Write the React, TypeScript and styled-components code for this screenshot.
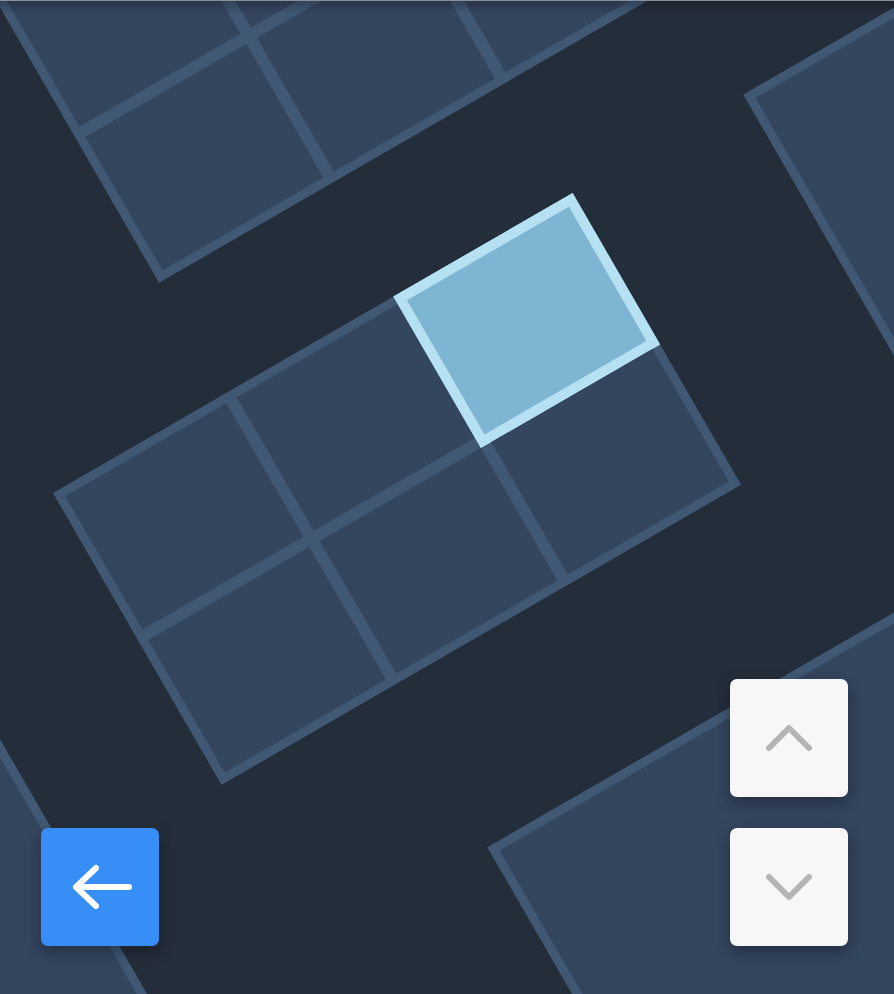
import React from "react";
import styled, { createGlobalStyle, css } from "styled-components";

const GlobalStyle = createGlobalStyle`
  *, *::before, *::after { box-sizing: border-box; }
  html, body { margin: 0; padding: 0; background: #242d3a; }
  body { font-family: "Liberation Sans", Arial, sans-serif; }
`;

const Board = styled.main`
  position: relative;
  width: 894px;
  height: 994px;
  overflow: hidden;
  background: #242d3a;

  &::after {
    content: "";
    position: absolute;
    left: 0;
    right: 0;
    top: 0;
    height: 14px;
    border-top: 1px solid #8b9097;
    background: linear-gradient(rgba(10, 14, 22, 0.28), rgba(10, 14, 22, 0));
    pointer-events: none;
    z-index: 1;
  }
`;

const Plane = styled.div`
  position: absolute;
  left: 53px;
  top: 493px;
  width: 0;
  height: 0;
  transform: rotate(-30deg);
  transform-origin: 0 0;
`;

type GridProps = {
  $x: number;
  $y: number;
  $w: number;
  $h: number;
  $cols: number;
  $rows: number;
};

const Grid = styled.div<GridProps>`
  position: absolute;
  left: ${(p) => p.$x}px;
  top: ${(p) => p.$y}px;
  width: ${(p) => p.$w}px;
  height: ${(p) => p.$h}px;
  display: grid;
  grid-template-columns: repeat(${(p) => p.$cols}, 1fr);
  grid-template-rows: repeat(${(p) => p.$rows}, 1fr);
  gap: 12px;
  padding: 9px;
  background: #405873;
`;

const Cell = styled.div<{ $active?: boolean }>`
  background: #34455e;
  ${(p) =>
    p.$active &&
    css`
      margin: -9px -9px -12px -12px;
      background: #7db5d3;
      border: 10px solid #b6e1f2;
    `}
`;

const Controls = styled.div`
  position: absolute;
  left: 41px;
  right: 46px;
  bottom: 48px;
  display: flex;
  justify-content: space-between;
  align-items: flex-end;
  z-index: 2;
`;

const Stack = styled.div`
  display: flex;
  flex-direction: column;
  gap: 31px;
`;

const Key = styled.button<{ $primary?: boolean }>`
  width: 118px;
  height: 118px;
  padding: 0;
  border: 0;
  border-radius: 7px;
  display: grid;
  place-items: center;
  background: ${(p) => (p.$primary ? "#378ef7" : "#f7f7f7")};
  box-shadow: 0 6px 16px rgba(8, 12, 20, 0.4);
  cursor: pointer;
`;

type TileDef = {
  x: number;
  y: number;
  w: number;
  h: number;
  cols: number;
  rows: number;
  active?: number;
};

const tiles: TileDef[] = [
  { x: -800, y: -60, w: 631, h: 960, cols: 1, rows: 1 },
  { x: 197, y: -632.5, w: 600, h: 503.5, cols: 3, rows: 3 },
  { x: 0, y: 0, w: 600, h: 337, cols: 3, rows: 2, active: 2 },
  { x: 797, y: 0, w: 520, h: 640, cols: 1, rows: 1 },
  { x: 199, y: 524, w: 760, h: 520, cols: 1, rows: 1 },
];

const ArrowLeft = () => (
  <svg width="62" height="46" viewBox="0 0 62 46" fill="none" style={{ marginLeft: 4 }}>
    <path
      d="M5 23 H58 M25 4 L5 23 L25 42"
      stroke="#ffffff"
      strokeWidth="6"
      strokeLinecap="round"
      strokeLinejoin="round"
    />
  </svg>
);

const Chevron = ({ down }: { down?: boolean }) => (
  <svg width="48" height="28" viewBox="0 0 48 28" fill="none">
    <path
      d={down ? "M4 4 L24 24 L44 4" : "M4 24 L24 4 L44 24"}
      stroke="#b5b5b5"
      strokeWidth="6"
      strokeLinecap="round"
      strokeLinejoin="round"
    />
  </svg>
);

export default function App() {
  return (
    <>
      <GlobalStyle />
      <Board>
        <Plane>
          {tiles.map((t, i) => (
            <Grid
              key={i}
              $x={t.x}
              $y={t.y}
              $w={t.w}
              $h={t.h}
              $cols={t.cols}
              $rows={t.rows}
            >
              {Array.from({ length: t.cols * t.rows }).map((_, j) => (
                <Cell key={j} $active={t.active === j} />
              ))}
            </Grid>
          ))}
        </Plane>
        <Controls>
          <Key $primary aria-label="Back">
            <ArrowLeft />
          </Key>
          <Stack>
            <Key aria-label="Up">
              <Chevron />
            </Key>
            <Key aria-label="Down">
              <Chevron down />
            </Key>
          </Stack>
        </Controls>
      </Board>
    </>
  );
}
